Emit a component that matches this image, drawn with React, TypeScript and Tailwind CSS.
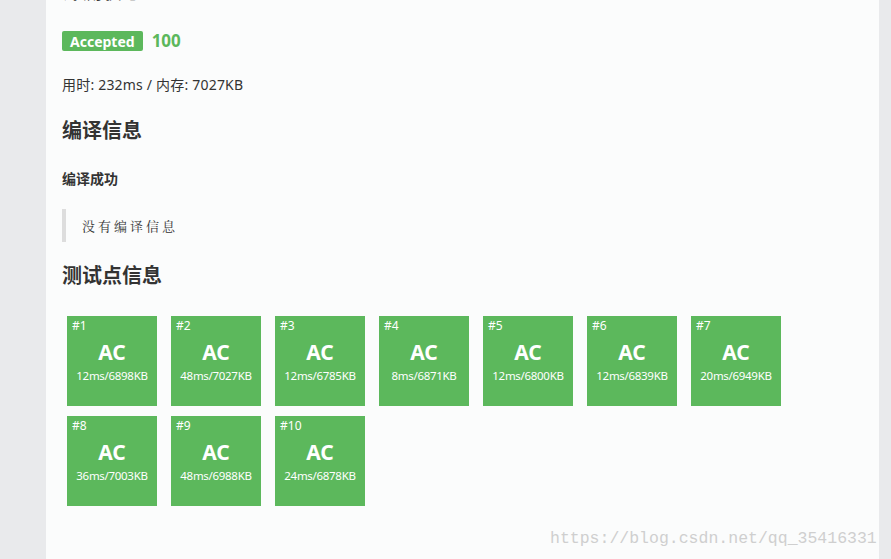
import React from "react";

const cases = [
  { id: 1, time: 12, mem: 6898 },
  { id: 2, time: 48, mem: 7027 },
  { id: 3, time: 12, mem: 6785 },
  { id: 4, time: 8, mem: 6871 },
  { id: 5, time: 12, mem: 6800 },
  { id: 6, time: 12, mem: 6839 },
  { id: 7, time: 20, mem: 6949 },
  { id: 8, time: 36, mem: 7003 },
  { id: 9, time: 48, mem: 6988 },
  { id: 10, time: 24, mem: 6878 },
];

const font = "font-['Noto_Sans','Noto_Sans_CJK_SC',sans-serif]";

function CaseBox({ id, time, mem }: { id: number; time: number; mem: number }) {
  return (
    <div className="flex h-[90px] w-[90px] flex-col bg-[#5cb85c] px-[5px] pt-[2px] text-white">
      <span className="text-[12px] leading-[16px]">#{id}</span>
      <span className="mt-[4px] text-center text-[21px] font-bold leading-[28px]">AC</span>
      <span className="mt-[2px] text-center text-[11.5px] leading-[16px] tracking-[-0.3px]">
        {time}ms/{mem}KB
      </span>
    </div>
  );
}

export default function App() {
  return (
    <div className={`relative flex h-[559px] w-full overflow-hidden bg-[#e9eaec] ${font} text-[#333]`}>
      <div className="w-[46px] shrink-0" />
      <div className="flex w-[833px] shrink-0 flex-col bg-[#fbfcfc] pl-[16px]">
        <h2 className="-mt-[22px] text-[20px] font-bold leading-[28px]">评测状态 2</h2>

        <div className="mt-[25px] flex h-[20px] items-center gap-[9px]">
          <span className="flex h-[20px] items-center rounded-[2px] bg-[#5cb85c] px-[8px] text-[14px] font-bold text-white">
            Accepted
          </span>
          <span className="text-[17px] font-bold leading-[20px] text-[#5cb85c]">100</span>
        </div>

        <p className="mt-[24px] text-[14px] leading-[20px] tracking-[0.2px]">用时: 232ms / 内存: 7027KB</p>

        <h3 className="mt-[22px] text-[20px] font-bold leading-[28px]">编译信息</h3>

        <p className="mt-[24px] text-[14px] font-bold leading-[20px]">编译成功</p>

        <div className="mt-[20px] flex h-[33px] items-center border-l-[4px] border-[#dddddd] pl-[16px]">
          <span className="font-['Noto_Serif_CJK_SC','Noto_Sans_CJK_SC',serif] text-[13px] tracking-[3px] text-[#333]">
            没有编译信息
          </span>
        </div>

        <h3 className="mt-[20px] text-[20px] font-bold leading-[28px]">测试点信息</h3>

        <div className="mt-[26px] flex w-[740px] flex-wrap gap-x-[14px] gap-y-[10px] pl-[5px]">
          {cases.map((c) => (
            <CaseBox key={c.id} {...c} />
          ))}
        </div>
      </div>

      <span className="absolute left-[550px] top-[527px] font-['Liberation_Mono',monospace] text-[16.5px] text-[#cfcfcf]">
        https://blog.csdn.net/qq_35416331
      </span>
    </div>
  );
}
